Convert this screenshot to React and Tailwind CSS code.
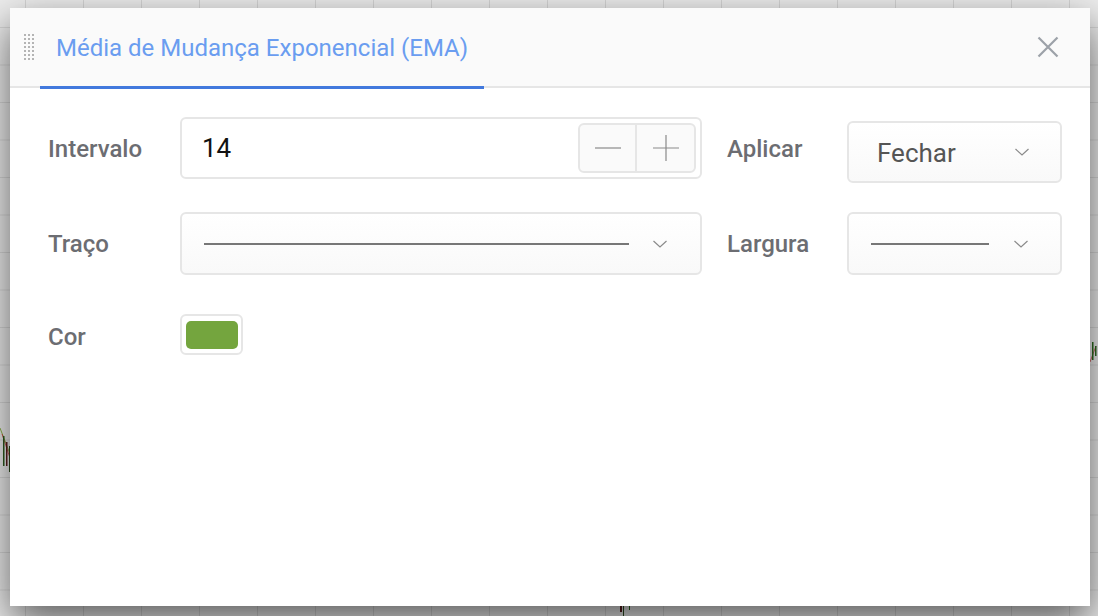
function DragHandle() {
  const dots = [];
  for (let r = 0; r < 7; r++) {
    for (let c = 0; c < 3; c++) {
      dots.push(<rect key={r + '-' + c} x={c * 4} y={r * 4} width="2" height="2" fill="#b4b4b4" />);
    }
  }
  return (
    <svg width="11" height="27" viewBox="0 0 11 27" className="shrink-0">
      {dots}
    </svg>
  );
}

function Chevron() {
  return (
    <svg width="16" height="10" viewBox="0 0 16 10" className="shrink-0">
      <path d="M1.5 2 L8 8 L14.5 2" fill="none" stroke="#8a8a8a" strokeWidth="1.2" />
    </svg>
  );
}

function CloseIcon() {
  return (
    <svg width="22" height="22" viewBox="0 0 22 22" className="ml-auto shrink-0">
      <path d="M1.5 1.5 L20.5 20.5 M20.5 1.5 L1.5 20.5" stroke="#9ca1a8" strokeWidth="2.2" fill="none" />
    </svg>
  );
}

function Label({ children }) {
  return <div className="text-[24px] font-medium text-[#6c6d72] leading-none">{children}</div>;
}

function SelectBox({ className, children }) {
  return (
    <div
      className={
        'flex items-center justify-between border-2 border-[#e6e6e6] rounded-[6px] bg-[linear-gradient(to_bottom,#ffffff,#f9f9f9)] ' +
        className
      }
    >
      {children}
    </div>
  );
}

function Candles({ className }) {
  return (
    <svg width="14" height="50" viewBox="0 0 14 50" className={className}>
      <path d="M0 4 L10 30" stroke="#8bb34a" strokeWidth="1" fill="none" />
      <path d="M2 10 L12 40" stroke="#c44" strokeWidth="0.8" fill="none" />
      <rect x="3" y="12" width="1.5" height="30" fill="#2d5a1e" />
      <rect x="6" y="18" width="1.5" height="24" fill="#5a1e1e" />
      <rect x="9" y="22" width="1.5" height="26" fill="#2d4a1e" />
    </svg>
  );
}

export default function App() {
  return (
    <div
      className="relative h-[616px] w-[1098px] overflow-hidden bg-[#eeeeee] bg-[linear-gradient(to_right,#d6d6d6_1px,transparent_1px),linear-gradient(to_bottom,#d9d9d9_1px,transparent_1px)] bg-[size:58px_37.5px] bg-[position:25px_27px] pt-2 pl-[10px]"
      style={{ fontFamily: 'Roboto, "Noto Sans", Arial, sans-serif' }}
    >
      <Candles className="absolute left-0 top-[424px]" />
      <svg width="10" height="30" viewBox="0 0 10 30" className="absolute left-[1088px] top-[336px]">
        <path d="M2 26 L8 10" stroke="#c44" strokeWidth="0.8" fill="none" />
        <rect x="4" y="6" width="1.5" height="18" fill="#2d6a1e" />
        <rect x="7" y="10" width="1.5" height="10" fill="#2d6a1e" />
      </svg>
      <svg width="16" height="12" viewBox="0 0 16 12" className="absolute left-[618px] top-[604px]">
        <rect x="2" y="0" width="2" height="8" fill="#5a1e1e" />
        <rect x="5" y="0" width="1" height="12" fill="#2d4a1e" />
        <rect x="11" y="0" width="1" height="6" fill="#2d6a1e" />
      </svg>

      <div className="relative flex h-[598px] w-[1080px] flex-col bg-white shadow-[0_16px_40px_rgba(0,0,0,0.62)]">
        <div className="relative flex h-[80px] items-center border-b-2 border-[#e6e6e6] bg-[#fafafa] pl-[14px] pr-[31px]">
          <DragHandle />
          <div className="relative ml-[21px] flex h-full items-center">
            <span className="pt-[1px] text-[24px] text-[#6a9df0]">Média de Mudança Exponencial (EMA)</span>
          </div>
          <div className="absolute bottom-[-3px] left-[30px] h-[3px] w-[444px] bg-[#4279dd]" />
          <CloseIcon />
        </div>

        <div className="flex flex-col pl-[38px] pt-[29px]">
          <div className="flex items-start">
            <div className="flex h-[62px] w-[132px] items-center pt-[2px]">
              <Label>Intervalo</Label>
            </div>
            <div className="flex h-[62px] w-[522px] items-center justify-between rounded-[6px] border-2 border-[#e6e6e6] bg-white pl-[20px] pr-[4px]">
              <span className="text-[26px] text-[#111]">14</span>
              <div className="flex h-[50px] items-stretch rounded-[6px] border-2 border-[#e6e6e6] bg-[#fafafa]">
                <div className="flex w-[57px] items-center justify-center border-r-2 border-[#e6e6e6]">
                  <svg width="28" height="28" viewBox="0 0 28 28">
                    <path d="M1 14 H27" stroke="#8a8a8a" strokeWidth="1.2" />
                  </svg>
                </div>
                <div className="flex w-[57px] items-center justify-center">
                  <svg width="28" height="28" viewBox="0 0 28 28">
                    <path d="M1 14 H27 M14 1 V27" stroke="#8a8a8a" strokeWidth="1.2" />
                  </svg>
                </div>
              </div>
            </div>
            <div className="flex h-[62px] w-[145px] items-center pl-[25px] pt-[2px]">
              <Label>Aplicar</Label>
            </div>
            <SelectBox className="mt-[4px] h-[62px] w-[215px] pl-[28px] pr-[30px]">
              <span className="pt-[2px] text-[26px] text-[#555]">Fechar</span>
              <Chevron />
            </SelectBox>
          </div>

          <div className="mt-[29px] flex items-start">
            <div className="flex h-[63px] w-[132px] items-center">
              <Label>Traço</Label>
            </div>
            <SelectBox className="h-[63px] w-[522px] pl-[22px] pr-[32px]">
              <div className="h-[2px] w-[425px] bg-[#777]" />
              <Chevron />
            </SelectBox>
            <div className="flex h-[63px] w-[145px] items-center pl-[25px]">
              <Label>Largura</Label>
            </div>
            <SelectBox className="h-[63px] w-[215px] pl-[22px] pr-[31px]">
              <div className="h-[2px] w-[118px] bg-[#777]" />
              <Chevron />
            </SelectBox>
          </div>

          <div className="mt-[39px] flex items-center">
            <div className="flex h-[40px] w-[132px] items-center pt-[4px]">
              <Label>Cor</Label>
            </div>
            <div className="flex h-[41px] w-[63px] items-center justify-center rounded-[6px] border-2 border-[#e6e6e6] bg-white">
              <div className="h-[28px] w-[52px] rounded-[5px] bg-[#74a53e]" />
            </div>
          </div>
        </div>
      </div>
    </div>
  );
}
